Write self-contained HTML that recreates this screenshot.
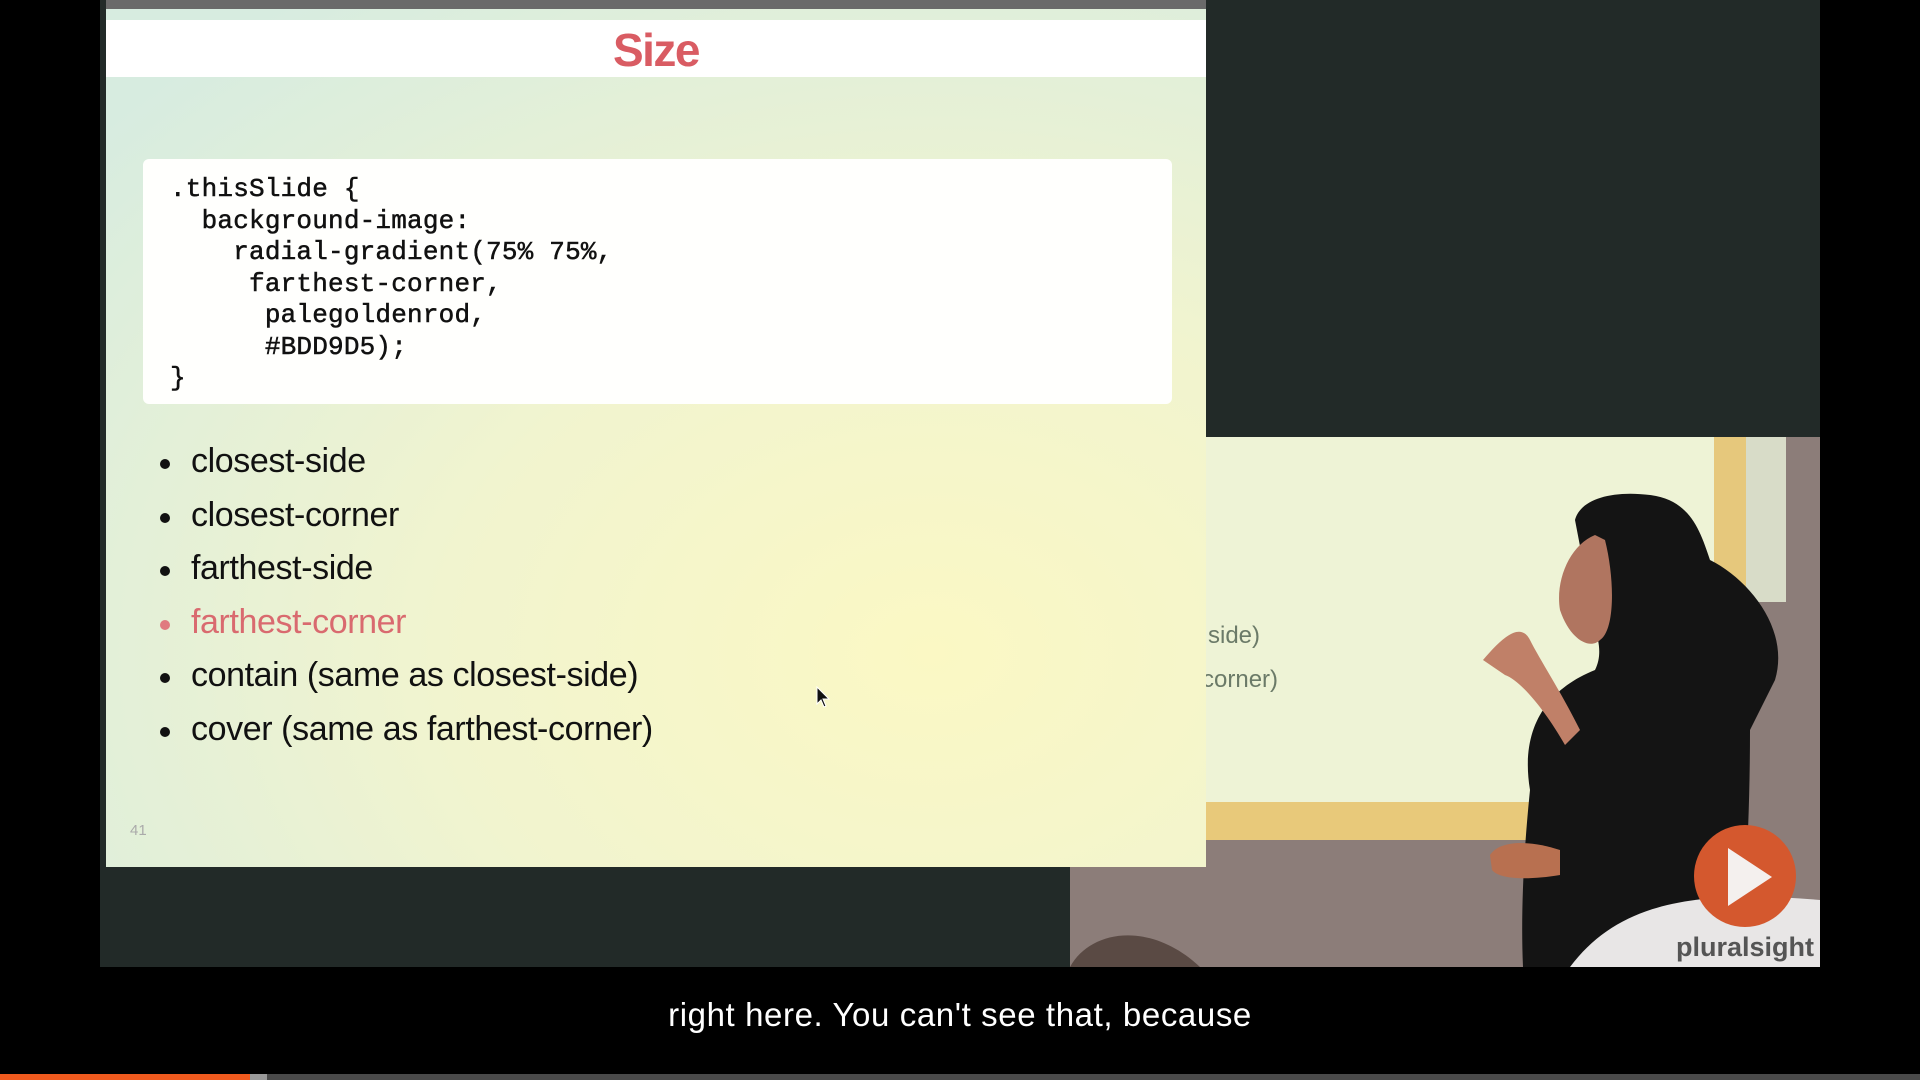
<!DOCTYPE html>
<html><head><meta charset="utf-8"><style>
*{margin:0;padding:0;box-sizing:border-box}
body{width:1920px;height:1080px;background:#000;position:relative;overflow:hidden;font-family:"Liberation Sans",sans-serif}
.abs{position:absolute}
#video{left:100px;top:0;width:1720px;height:967px;background:#222a28}
#topstrip{left:106px;top:0;width:1100px;height:9px;background:#6a6a6a}
#slide{left:106px;top:9px;width:1100px;height:858px;background:radial-gradient(ellipse 1100px 800px at 75% 75%,#fbf8c4 0%,#f1f4cf 45%,#d7ece0 100%)}
#title{left:0;top:11px;width:1100px;height:57px;background:#fff;text-align:center;color:#d95c63;font-size:46px;font-weight:bold;line-height:60px;letter-spacing:-1.5px}
#code{left:37px;top:150px;width:1029px;height:245px;background:#fffffd;border-radius:6px}
#code pre{position:absolute;left:27px;top:15px;font-family:"Liberation Mono",monospace;font-size:26px;line-height:31.5px;color:#111;letter-spacing:0.2px;-webkit-text-stroke:0.5px #111}
ul{position:absolute;left:50px;top:426px;list-style:none}
li{font-size:34px;line-height:53.5px;color:#111;letter-spacing:-0.4px;position:relative;padding-left:35px}
li:before{content:"";position:absolute;left:4px;top:24px;width:10px;height:10px;border-radius:50%;background:#111}
li.r{color:#d96a6f}li.r:before{background:#e07a7f}
#num{left:24px;top:813px;font-size:15px;color:#aaa}
#cam{left:1206px;top:437px;width:614px;height:530px;background:#8c7d79}
#cam2{left:1070px;top:867px;width:136px;height:100px;background:#8c7d79}
#screen{left:1206px;top:437px;width:508px;height:365px;background:#eef3d6}
#frame{left:1206px;top:802px;width:540px;height:38px;background:#e8c97a}
#frameR{left:1714px;top:437px;width:32px;height:380px;background:#e6c87c}
#win{left:1746px;top:437px;width:40px;height:165px;background:#d8dcc8}
</style></head><body>
<div class="abs" id="video"></div>
<div class="abs" id="cam"></div>
<div class="abs" id="cam2"></div>
<div class="abs" id="screen"></div>
<div class="abs" id="frameR"></div>
<div class="abs" id="win"></div>
<div class="abs" id="frame"></div>
<div class="abs" style="left:1208px;top:622px;font-size:24px;color:#6b7a68">side)</div>
<div class="abs" style="left:1202px;top:666px;font-size:24px;color:#6b7a68">corner)</div>
<svg class="abs" style="left:1070px;top:430px" width="750" height="537" viewBox="1070 430 750 537">
<path d="M1070 967 C1090 930 1150 920 1200 967Z" fill="#5a4a44"/>
<path d="M1575 520 C1580 500 1610 490 1650 495 C1690 500 1700 530 1710 560 C1750 580 1790 630 1775 680 L1750 730 C1750 820 1745 900 1740 967 L1523 967 C1520 900 1526 830 1530 790 C1520 730 1545 690 1595 670 C1600 660 1600 650 1598 640 Z" fill="#141414"/>
<path d="M1595 535 C1570 545 1555 580 1560 610 C1570 640 1590 650 1600 640 C1615 630 1615 580 1605 540Z" fill="#b07560"/>
<path d="M1483 660 C1500 640 1520 620 1530 640 C1540 660 1560 690 1580 730 L1565 745 C1545 710 1520 680 1505 675Z" fill="#c08068"/>
<path d="M1490 855 C1500 840 1530 840 1560 850 L1560 875 C1530 880 1500 880 1492 870Z" fill="#b87050"/>
<path d="M1570 967 C1620 900 1700 890 1820 900 L1820 967Z" fill="#e8e6e6"/>
<circle cx="1745" cy="876" r="51" fill="#d4582e"/>
<path d="M1728 848 L1728 906 L1772 877Z" fill="#f4f0ee"/>
<text x="1745" y="956" text-anchor="middle" font-family="Liberation Sans" font-weight="bold" font-size="27" fill="#555">pluralsight</text>
</svg>
<div class="abs" id="topstrip"></div>
<div class="abs" id="slide">
<div class="abs" id="title">Size</div>
<div class="abs" id="code"><pre>.thisSlide {
  background-image:
    radial-gradient(75% 75%,
     farthest-corner,
      palegoldenrod,
      #BDD9D5);
}</pre></div>
<ul>
<li>closest-side</li>
<li>closest-corner</li>
<li>farthest-side</li>
<li class="r">farthest-corner</li>
<li>contain (same as closest-side)</li>
<li>cover (same as farthest-corner)</li>
</ul>
<div class="abs" id="num">41</div>
</div>
<svg class="abs" style="left:816px;top:686px" width="16" height="24"><path d="M1 1 L1 18 L5 14 L8 21 L10 20 L7 13 L13 13Z" fill="#111" stroke="#fff" stroke-width="1"/></svg>
<div class="abs" style="left:0;top:996px;width:1920px;text-align:center;color:#fff;font-size:33px;letter-spacing:0.6px">right here. You can't see that, because</div>
<div class="abs" style="left:0;top:1074px;width:1920px;height:6px;background:#4a4a4a"></div>
<div class="abs" style="left:0;top:1074px;width:267px;height:6px;background:#999"></div>
<div class="abs" style="left:0;top:1074px;width:250px;height:6px;background:#f05a1e"></div>
</body></html>
